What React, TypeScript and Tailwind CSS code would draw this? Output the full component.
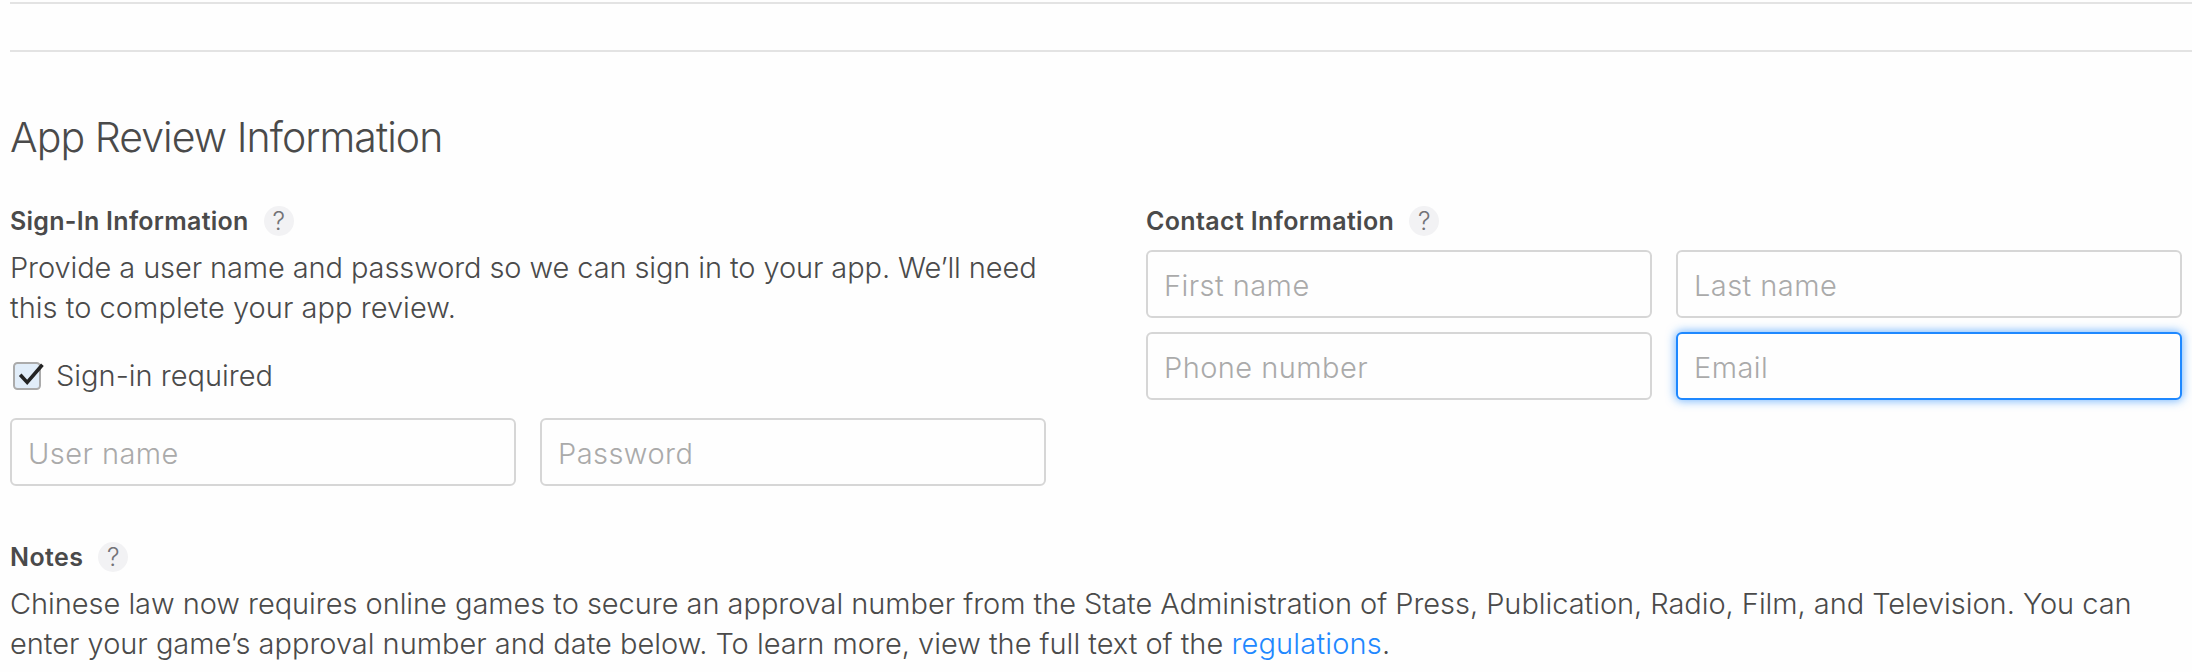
function Help() {
  return (
    <button
      type="button"
      className="flex size-[30px] shrink-0 items-center justify-center rounded-full bg-[#f2f2f4] text-[25px] leading-[30px] font-light text-[#737377]"
    >
      ?
    </button>
  );
}

function SectionLabel({ text, tracking }: { text: string; tracking: string }) {
  return (
    <div className="flex h-[30px] items-center gap-[15px]">
      <h3 className={`text-[25px] leading-[30px] font-[580] ${tracking}`}>{text}</h3>
      <Help />
    </div>
  );
}

function Field({ placeholder, focused = false }: { placeholder: string; focused?: boolean }) {
  return (
    <input
      type="text"
      placeholder={placeholder}
      className={`h-[68px] w-full min-w-0 rounded-[6px] border-2 bg-[#fefefe] px-4 pt-[3px] text-[29px] font-light tracking-[0.45px] outline-none placeholder:text-[#aaaaaa] ${
        focused ? "border-[#1e88ff] shadow-[0_0_10px_1px_rgba(30,136,255,0.6)]" : "border-[#d6d6d6]"
      }`}
    />
  );
}

function CheckedBox() {
  return (
    <svg width="36" height="36" viewBox="0 0 36 36" className="shrink-0" fill="none">
      <rect x="4" y="5" width="26" height="26" rx="3.5" fill="#e1edf9" stroke="#ababab" strokeWidth="2" />
      <path d="M10.2 16.8 L17.2 24.4 L32.4 6.8" stroke="#242424" strokeWidth="3.6" />
    </svg>
  );
}

export default function App() {
  return (
    <main className="h-[672px] w-full overflow-hidden bg-[#fefefe] pl-[10px] font-['Inter',sans-serif] text-[#4a4a4a]">
      <div className="pt-[2px]">
        <div className="h-[50px] border-y-2 border-[#e3e3e3]" />
      </div>

      <h2 className="mt-[60px] text-[41px] leading-[50px] font-light tracking-[-0.95px]">App Review Information</h2>

      <div className="mt-[44px] grid grid-cols-[1036px_1036px] gap-x-[100px]">
        <section>
          <SectionLabel text="Sign-In Information" tracking="tracking-[0.28px]" />
          <p className="mt-3 text-[29px] leading-[40px] font-light whitespace-nowrap">
            <span className="tracking-[-0.105px]">
              Provide a user name and password so we can sign in to your app. We’ll need
            </span>
            <br />
            <span className="tracking-[0.03px]">this to complete your app review.</span>
          </p>
          <label className="mt-[28px] flex h-[40px] items-center gap-[10px] text-[29px] leading-[40px] font-light">
            <CheckedBox />
            Sign-in required
          </label>
          <div className="mt-[22px] grid grid-cols-2 gap-6">
            <Field placeholder="User name" />
            <Field placeholder="Password" />
          </div>
        </section>

        <section>
          <SectionLabel text="Contact Information" tracking="tracking-[0.36px]" />
          <div className="mt-[14px] grid grid-cols-2 gap-x-6 gap-y-[14px]">
            <Field placeholder="First name" />
            <Field placeholder="Last name" />
            <Field placeholder="Phone number" />
            <Field placeholder="Email" focused />
          </div>
        </section>
      </div>

      <section className="mt-[56px]">
        <SectionLabel text="Notes" tracking="tracking-[0.4px]" />
        <p className="mt-3 text-[29px] leading-[40px] font-light whitespace-nowrap">
          <span className="tracking-[-0.048px]">
            Chinese law now requires online games to secure an approval number from the State Administration of Press,
            Publication, Radio, Film, and Television. You can
          </span>
          <br />
          <span className="tracking-[-0.015px]">
            enter your game’s approval number and date below. To learn more, view the full text of the{" "}
          </span>
          <a href="#" className="tracking-[0.17px] text-[#1e88ff]">
            regulations
          </a>
          .
        </p>
      </section>
    </main>
  );
}
